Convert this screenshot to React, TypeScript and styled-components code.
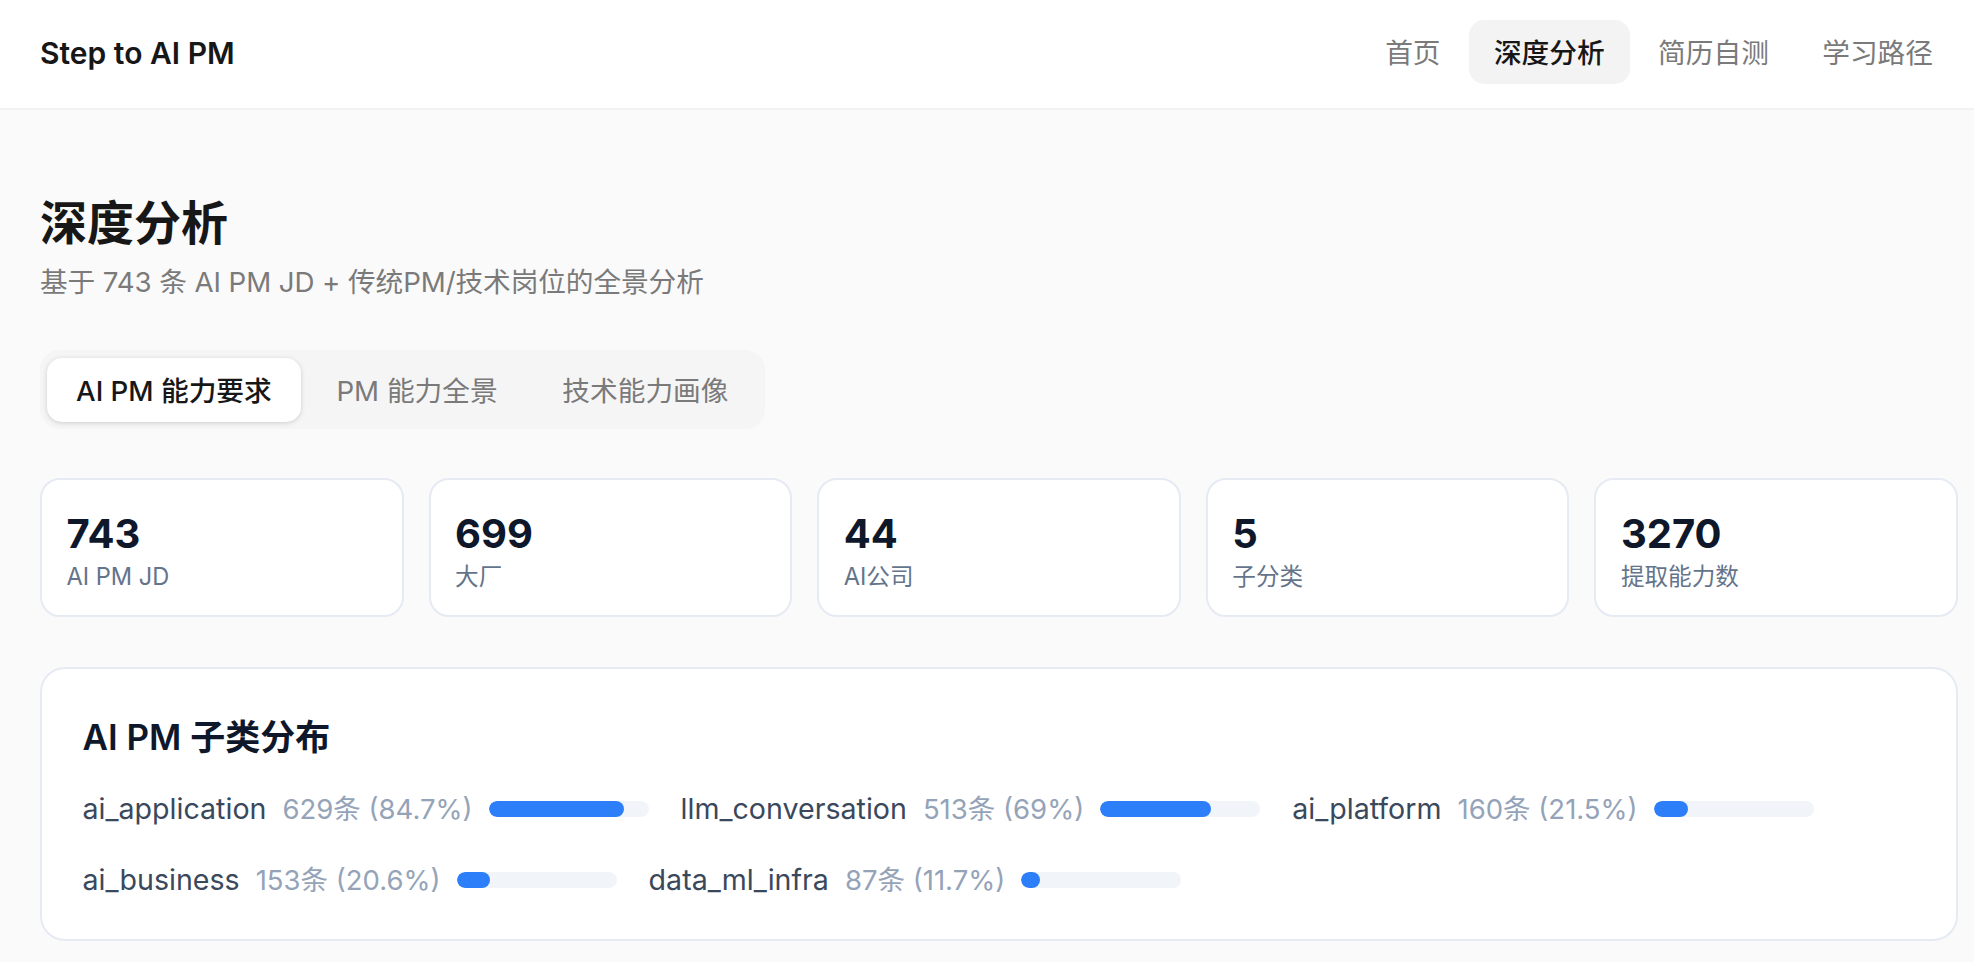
import styled, { createGlobalStyle } from "styled-components";

const GlobalStyle = createGlobalStyle`
  html, body {
    margin: 0;
    padding: 0;
    background: #fafafa;
    font-family: Inter, "Noto Sans CJK SC", sans-serif;
    overflow: hidden;
  }
`;

const Header = styled.header`
  height: 108px;
  box-sizing: content-box;
  background: #fff;
  border-bottom: 2px solid #f2f2f2;
  display: flex;
  align-items: center;
  justify-content: space-between;
  padding: 0 16px 0 40px;
`;

const Logo = styled.div`
  font-size: 30px;
  font-weight: 600;
  color: #171717;
  margin-bottom: 2px;
`;

const Nav = styled.nav`
  display: flex;
  gap: 3.4px;
  margin-bottom: 4px;
`;

const NavItem = styled.a<{ $active?: boolean }>`
  height: 64px;
  box-sizing: border-box;
  display: flex;
  align-items: center;
  padding: 0 25px 2px;
  border-radius: 15px;
  font-size: 27.7px;
  font-weight: ${({ $active }) => ($active ? 500 : 400)};
  color: ${({ $active }) => ($active ? "#171717" : "#7a7a7a")};
  background: ${({ $active }) => ($active ? "#f3f3f3" : "transparent")};
`;

const Main = styled.main`
  padding: 83px 16px 0 40px;
`;

const Title = styled.h1`
  margin: 0;
  font-size: 47px;
  line-height: 60px;
  font-weight: 600;
  color: #171717;
`;

const Subtitle = styled.p`
  margin: 9px 0 0;
  font-size: 27.7px;
  line-height: 40px;
  letter-spacing: -0.1px;
  color: #7a7a7a;
`;

const TabRow = styled.div`
  display: flex;
`;

const Tabs = styled.div`
  display: inline-flex;
  gap: 6.7px;
  margin-top: 48px;
  padding: 8px 7.5px 7px 7px;
  background: #f5f5f5;
  border-radius: 20px;
`;

const Tab = styled.button<{ $active?: boolean }>`
  height: 64px;
  box-sizing: border-box;
  padding: 0 29px 2px;
  border: none;
  border-radius: 15px;
  font-family: inherit;
  font-size: 27.7px;
  font-weight: ${({ $active }) => ($active ? 500 : 400)};
  color: ${({ $active }) => ($active ? "#171717" : "#7a7a7a")};
  background: ${({ $active }) => ($active ? "#fff" : "transparent")};
  box-shadow: ${({ $active }) =>
    $active ? "0 1px 5px rgba(0, 0, 0, 0.16)" : "none"};
`;

const Cards = styled.div`
  display: grid;
  grid-template-columns: repeat(5, 1fr);
  gap: 25px;
  margin-top: 49px;
`;

const Card = styled.div`
  height: 139px;
  box-sizing: border-box;
  background: #fff;
  border: 2px solid #e5eaf3;
  border-radius: 20px;
  padding: 27px 24.5px 0;
`;

const CardValue = styled.div`
  font-size: 40px;
  line-height: 54px;
  font-weight: 700;
  color: #0f172a;
`;

const CardLabel = styled.div`
  font-size: 23.6px;
  line-height: 32px;
  color: #64748b;
`;

const Panel = styled.section`
  margin-top: 50px;
  height: 274px;
  box-sizing: border-box;
  background: #fff;
  border: 2px solid #e5eaf3;
  border-radius: 25px;
  padding: 44.5px 40.5px 0;
`;

const PanelTitle = styled.h2`
  margin: 0;
  font-size: 35px;
  line-height: 46px;
  font-weight: 600;
  color: #0f172a;
`;

const Rows = styled.div`
  display: flex;
  flex-wrap: wrap;
  column-gap: 32px;
  row-gap: 31px;
  margin-top: 29px;
`;

const Row = styled.div`
  display: flex;
  align-items: center;
  gap: 16px;
  height: 40px;
`;

const RowName = styled.span`
  font-size: 28.6px;
  color: #3a485c;
`;

const RowCount = styled.span`
  font-size: 27.5px;
  color: #94a3b8;
  margin-bottom: 4px;
`;

const Track = styled.div`
  width: 160px;
  height: 16px;
  border-radius: 8px;
  background: #f1f5f9;
  overflow: hidden;
`;

const Fill = styled.div`
  height: 100%;
  border-radius: 8px;
  background: #2d7ff9;
`;

const navItems = ["首页", "深度分析", "简历自测", "学习路径"];
const tabs = ["AI PM 能力要求", "PM 能力全景", "技术能力画像"];
const stats = [
  { value: "743", label: "AI PM JD" },
  { value: "699", label: "大厂" },
  { value: "44", label: "AI公司" },
  { value: "5", label: "子分类" },
  { value: "3270", label: "提取能力数" },
];
const subTypes = [
  { name: "ai_application", count: 629, pct: 84.7 },
  { name: "llm_conversation", count: 513, pct: 69 },
  { name: "ai_platform", count: 160, pct: 21.5 },
  { name: "ai_business", count: 153, pct: 20.6 },
  { name: "data_ml_infra", count: 87, pct: 11.7 },
];

export default function App() {
  return (
    <>
      <GlobalStyle />
      <Header>
        <Logo>Step to AI PM</Logo>
        <Nav>
          {navItems.map((item) => (
            <NavItem key={item} $active={item === "深度分析"}>
              {item}
            </NavItem>
          ))}
        </Nav>
      </Header>
      <Main>
        <Title>深度分析</Title>
        <Subtitle>基于 743 条 AI PM JD + 传统PM/技术岗位的全景分析</Subtitle>
        <TabRow>
          <Tabs>
            {tabs.map((tab, i) => (
              <Tab key={tab} $active={i === 0}>
                {tab}
              </Tab>
            ))}
          </Tabs>
        </TabRow>
        <Cards>
          {stats.map((s) => (
            <Card key={s.label}>
              <CardValue>{s.value}</CardValue>
              <CardLabel>{s.label}</CardLabel>
            </Card>
          ))}
        </Cards>
        <Panel>
          <PanelTitle>AI PM 子类分布</PanelTitle>
          <Rows>
            {subTypes.map((t) => (
              <Row key={t.name}>
                <RowName>{t.name}</RowName>
                <RowCount>
                  {t.count}条 ({t.pct}%)
                </RowCount>
                <Track>
                  <Fill style={{ width: `${t.pct}%` }} />
                </Track>
              </Row>
            ))}
          </Rows>
        </Panel>
      </Main>
    </>
  );
}
